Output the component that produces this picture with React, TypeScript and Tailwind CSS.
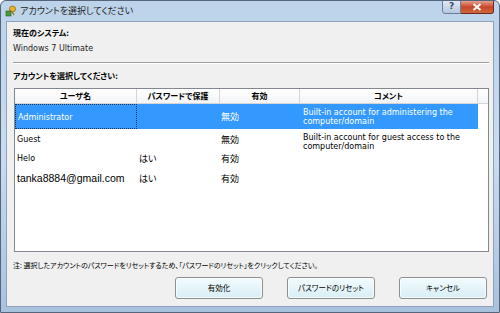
import React from "react";

const jp = {
  fontFamily: '"Noto Sans CJK JP", "DejaVu Sans", sans-serif',
  fontFeatureSettings: '"palt"',
};

function Row({
  name,
  pw,
  en,
  comment,
  selected,
  h,
  big,
}: {
  name: string;
  pw: string;
  en: string;
  comment: string[];
  selected?: boolean;
  h: string;
  big?: boolean;
}) {
  return (
    <div
      className={`grid grid-cols-[122px_83px_80px_178px] ${h} ${
        selected ? "bg-[#3399ff] text-white" : "text-black"
      } w-[463px]`}
    >
      <div
        className={`flex items-center pl-[2px] whitespace-nowrap ${
          selected ? "border border-dotted border-[#1a3050] pt-[2px]" : ""
        } ${big ? "text-[10.5px]" : "text-[8px]"}`}
        style={{ fontFamily: big ? '"Liberation Sans", sans-serif' : '"DejaVu Sans", sans-serif' }}
      >
        {name}
      </div>
      <div className="flex items-center pl-[2px] text-[9px]">{pw}</div>
      <div className="flex items-center pl-[1px] text-[9px]">{en}</div>
      <div
        className="flex flex-col justify-start pt-[4px] pl-[3px] text-[8px] leading-[9px]"
        style={{ fontFamily: '"DejaVu Sans", sans-serif' }}
      >
        {comment.map((c, i) => (
          <span key={i}>{c}</span>
        ))}
      </div>
    </div>
  );
}

function Btn({ label }: { label: string }) {
  return (
    <div className="w-[88px] h-[22px] rounded-[3px] border border-[#8e8f8f] bg-gradient-to-b from-[#f2fbfd] to-[#d8eef6] flex items-center justify-center text-[7.5px] whitespace-nowrap text-black shadow-[inset_0_0_0_1px_rgba(255,255,255,0.7)]">
      {label}
    </div>
  );
}

export default function App() {
  return (
    <div
      className="w-[500px] h-[313px] relative overflow-hidden border border-[#55667c] rounded-t-[6px] bg-gradient-to-b from-[#bcd3ea] via-[#c9dcef] to-[#a8c2de]"
      style={jp}
    >
      {/* Title bar */}
      <div className="h-[19px] flex items-center pl-[4px]">
        <svg width="12" height="12" viewBox="0 0 12 12">
          <circle cx="7.5" cy="4" r="3" fill="#e8b430" stroke="#9a6d10" strokeWidth="0.8" />
          <rect x="1" y="6" width="5" height="5" fill="#4a9a3a" stroke="#2a5a20" strokeWidth="0.6" />
          <path d="M6.5 6 L9 10" stroke="#9a6d10" strokeWidth="1.2" />
        </svg>
        <span className="ml-[3px] text-[9px] text-[#1e1e1e]">アカウントを選択してください</span>
      </div>
      {/* Caption buttons */}
      <div className="absolute top-[-1px] right-[5px] flex">
        <div
          className="w-[19px] h-[14px] border border-[#6d7f96] rounded-bl-[3px] bg-gradient-to-b from-[#e0e9f4] to-[#b4c8df] flex items-center justify-center text-[9px] text-[#3a4c66] font-bold"
          style={{ fontFamily: '"DejaVu Sans", sans-serif' }}
        >
          ?
        </div>
        <div className="w-[33px] h-[14px] border border-l-0 border-[#6d2a20] rounded-br-[3px] bg-gradient-to-b from-[#e4a08c] via-[#c8442a] to-[#d0683c] flex items-center justify-center">
          <svg width="10" height="8" viewBox="0 0 10 8">
            <path d="M1.5 1 L8.5 7 M8.5 1 L1.5 7" stroke="#fff" strokeWidth="2" />
          </svg>
        </div>
      </div>

      {/* Client area */}
      <div className="absolute left-[5px] right-[5px] top-[20px] bottom-[5px] bg-[#f0f0f0] border border-[#8ea2ba] flex flex-col">
        <div className="pl-[6px] pt-[5px] text-[8px] font-bold text-black leading-[12px]">現在のシステム:</div>
        <div
          className="pl-[6px] pt-[5px] text-[8px] text-[#222] leading-[10px]"
          style={{ fontFamily: '"DejaVu Sans", sans-serif' }}
        >
          Windows 7 Ultimate
        </div>
        <div className="mx-[6px] mt-[8px] h-[2px] border-t border-[#a0a0a0] border-b border-b-white w-[476px]" />
        <div className="pl-[6px] pt-[6px] text-[8px] font-bold text-black leading-[12px]">アカウントを選択してください:</div>

        {/* Table */}
        <div className="ml-[7px] mt-[6px] w-[475px] h-[164px] border border-[#828790] bg-white flex flex-col">
          <div className="flex h-[15px] border-b border-[#d5d5d5] bg-gradient-to-b from-white to-[#f3f4f6] text-[8px] font-bold text-black">
            <div className="w-[122px] border-r border-[#d5d5d5] flex items-center justify-center">ユーザ名</div>
            <div className="w-[83px] border-r border-[#d5d5d5] flex items-center justify-center">パスワードで保護</div>
            <div className="w-[80px] border-r border-[#d5d5d5] flex items-center justify-center">有効</div>
            <div className="w-[178px] border-r border-[#d5d5d5] flex items-center justify-center">コメント</div>
            <div className="flex-1" />
          </div>
          <div>
            <Row
              name="Administrator"
              pw=""
              en="無効"
              comment={["Built-in account for administering the", "computer/domain"]}
              selected
              h="h-[25px]"
            />
            <Row
              name="Guest"
              pw=""
              en="無効"
              comment={["Built-in account for guest access to the", "computer/domain"]}
              h="h-[20px]"
            />
            <Row name="Helo" pw="はい" en="有効" comment={[]} h="h-[20px]" />
            <Row name="tanka8884@gmail.com" pw="はい" en="有効" comment={[]} h="h-[20px]" big />
          </div>
        </div>

        <div className="pl-[6px] pt-[8px] text-[7px] text-black leading-[10px] whitespace-nowrap">
          注: 選択したアカウントのパスワードをリセットするため、「パスワードのリセット」をクリックしてください。
        </div>

        <div className="flex justify-end gap-[24px] pr-[6px] pt-[7px]">
          <Btn label="有効化" />
          <Btn label="パスワードのリセット" />
          <Btn label="キャンセル" />
        </div>
      </div>
    </div>
  );
}
